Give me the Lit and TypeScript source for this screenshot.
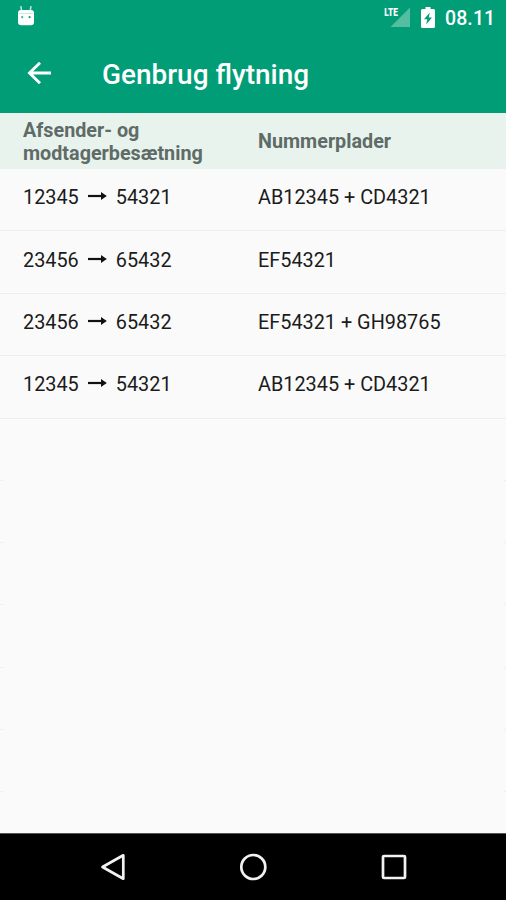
import { LitElement, html, css, svg } from "lit";
import { customElement } from "lit/decorators.js";

interface Move {
  from: string;
  to: string;
  plates: string;
}

const MOVES: Move[] = [
  { from: "12345", to: "54321", plates: "AB12345 + CD4321" },
  { from: "23456", to: "65432", plates: "EF54321" },
  { from: "23456", to: "65432", plates: "EF54321 + GH98765" },
  { from: "12345", to: "54321", plates: "AB12345 + CD4321" },
];

@customElement("status-bar")
class StatusBar extends LitElement {
  static styles = css`
    :host { display: flex; align-items: flex-start; height: 36px; color: #fff; }
    svg { display: block; flex: none; }
    .robot { margin: 5px auto 0 17px; }
    .signal { margin: 6px 11px 0 0; }
    .battery { margin: 6.500px 10px 0 0; }
    .lte { font: 900 10.500px Roboto, sans-serif; fill: #fff; }
    .time { font: 500 19.5px/37px Roboto, sans-serif; width: 61px; letter-spacing: 0.1px; white-space: nowrap; }
  `;
  render() {
    return html`
      <svg class="robot" width="18" height="22" viewBox="0 0 18 22">
        <path d="M4.600 6 3.800 1.200M13.200 6 14 1.200" stroke="#c5ebdf" stroke-width="1.500" />
        <path d="M1 8Q1 5 4 5H14Q17 5 17 8V17Q17 20.300 13.700 20.300H4.300Q1 20.300 1 17Z" fill="#fff" />
        <path d="M2 8.500H16" stroke="#bce5d9" stroke-width=".8" />
        <circle cx="5.200" cy="12.200" r="1.100" fill="#42b593" /><circle cx="12.600" cy="12.200" r="1.100" fill="#169f77" />
      </svg>
      <svg class="signal" width="26" height="22" viewBox="0 0 26 22">
        <path d="M26 1.500V21H6.500Z" fill="#55bda0" />
        <path d="M-1 0H14.500V11H-1Z" fill="#009d77" />
        <text class="lte" x="0.300" y="9.800" textLength="13.500" lengthAdjust="spacingAndGlyphs">LTE</text>
      </svg>
      <svg class="battery" width="14" height="21" viewBox="0 0 14 21">
        <path d="M4.500 0H9.500V2H12.500Q14 2 14 3.500V19.500Q14 21 12.500 21H1.500Q0 21 0 19.500V3.500Q0 2 1.500 2H4.500Z" fill="#fff" />
        <path d="M8.800 5.500 3 12.300H6.300L5.200 17.500 11 10.500H7.700Z" fill="#009d77" />
      </svg>
      <span class="time">08.11</span>
    `;
  }
}

@customElement("title-bar")
class TitleBar extends LitElement {
  static styles = css`
    :host { display: flex; align-items: center; height: 77px; color: #fff; }
    svg { display: block; margin: 0 50px 3px 27px; }
    .title { font: 500 27.950px/32px Roboto, sans-serif; white-space: nowrap; padding-top: 1px; }
  `;
  render() {
    return html`
      <svg width="25" height="24" viewBox="0 0 25 24">
        <path d="M24 12H2.500M13 1.800 2.500 12 13 22.200" fill="none" stroke="#fff" stroke-width="2.900" />
      </svg>
      <span class="title">Genbrug flytning</span>
    `;
  }
}

@customElement("nav-bar")
class NavBar extends LitElement {
  static styles = css`
    :host { display: flex; height: 67px; background: #000; justify-content: center; gap: 112px; align-items: center; box-sizing: border-box; border-top: 1px solid #555; padding-bottom: 1px; }
    svg { display: block; }
  `;
  icon(shape: unknown) {
    return html`<svg width="28" height="28" viewBox="0 0 28 28" fill="none" stroke="#f2f2f2" stroke-width="2.700">${shape}</svg>`;
  }
  render() {
    return html`
      ${this.icon(svg`<path d="M24.300 2.300V25.700L3.500 14Z" stroke-linejoin="round" />`)}
      ${this.icon(svg`<circle cx="14.300" cy="14" r="12" />`)}
      ${this.icon(svg`<rect x="4" y="3" width="22" height="22" rx="1" />`)}
    `;
  }
}

@customElement("app-root")
class AppRoot extends LitElement {
  static styles = css`
    :host { display: flex; flex-direction: column; width: 506px; height: 900px; overflow: hidden; background: #fafafa; font-family: Roboto, sans-serif; }
    .top { background: #009d77; height: 113px; flex: none; }
    .head, .row { display: grid; grid-template-columns: 235px 1fr; padding-left: 23px; align-items: center; box-sizing: border-box; flex: none; }
    .head { height: 56px; background: #e8f3ee; color: #5f6b66; font-weight: 700; font-size: 19.750px; line-height: 23px; padding-top: 1px; }
    .row { height: 62.400px; border-bottom: 1px solid #eeeeee; font-size: 19.850px; line-height: 24px; color: #1b1b1b; padding-bottom: 3px; white-space: nowrap; }
    .move { display: flex; align-items: center; }
    .arrow { margin: 0 9px 4px 9px; flex: none; }
    .rest { flex: 1; overflow: hidden; }
    .slot { height: 62.300px; box-sizing: border-box; display: flex; justify-content: space-between; align-items: flex-end; }
    .slot::before, .slot::after { content: ""; height: 1px; width: 4px; background: #f0f0f0; }
    .slot::after { width: 2px; }
    nav-bar { flex: none; }
  `;
  render() {
    return html`
      <header class="top"><status-bar></status-bar><title-bar></title-bar></header>
      <div class="head"><span>Afsender- og<br />modtagerbesætning</span><span>Nummerplader</span></div>
      ${MOVES.map(
        (m) => html`<div class="row">
          <span class="move">
            <span>${m.from}</span>
            <svg class="arrow" width="19" height="8" viewBox="0 0 19 8">
              <path d="M0 4H15" stroke="#111" stroke-width="2.200" />
              <path d="M13 0 18.800 4 13 8Z" fill="#111" />
            </svg>
            <span>${m.to}</span>
          </span>
          <span>${m.plates}</span>
        </div>`
      )}
      <div class="rest">${[0, 1, 2, 3, 4, 5].map(() => html`<div class="slot"></div>`)}</div>
      <nav-bar></nav-bar>
    `;
  }
}
